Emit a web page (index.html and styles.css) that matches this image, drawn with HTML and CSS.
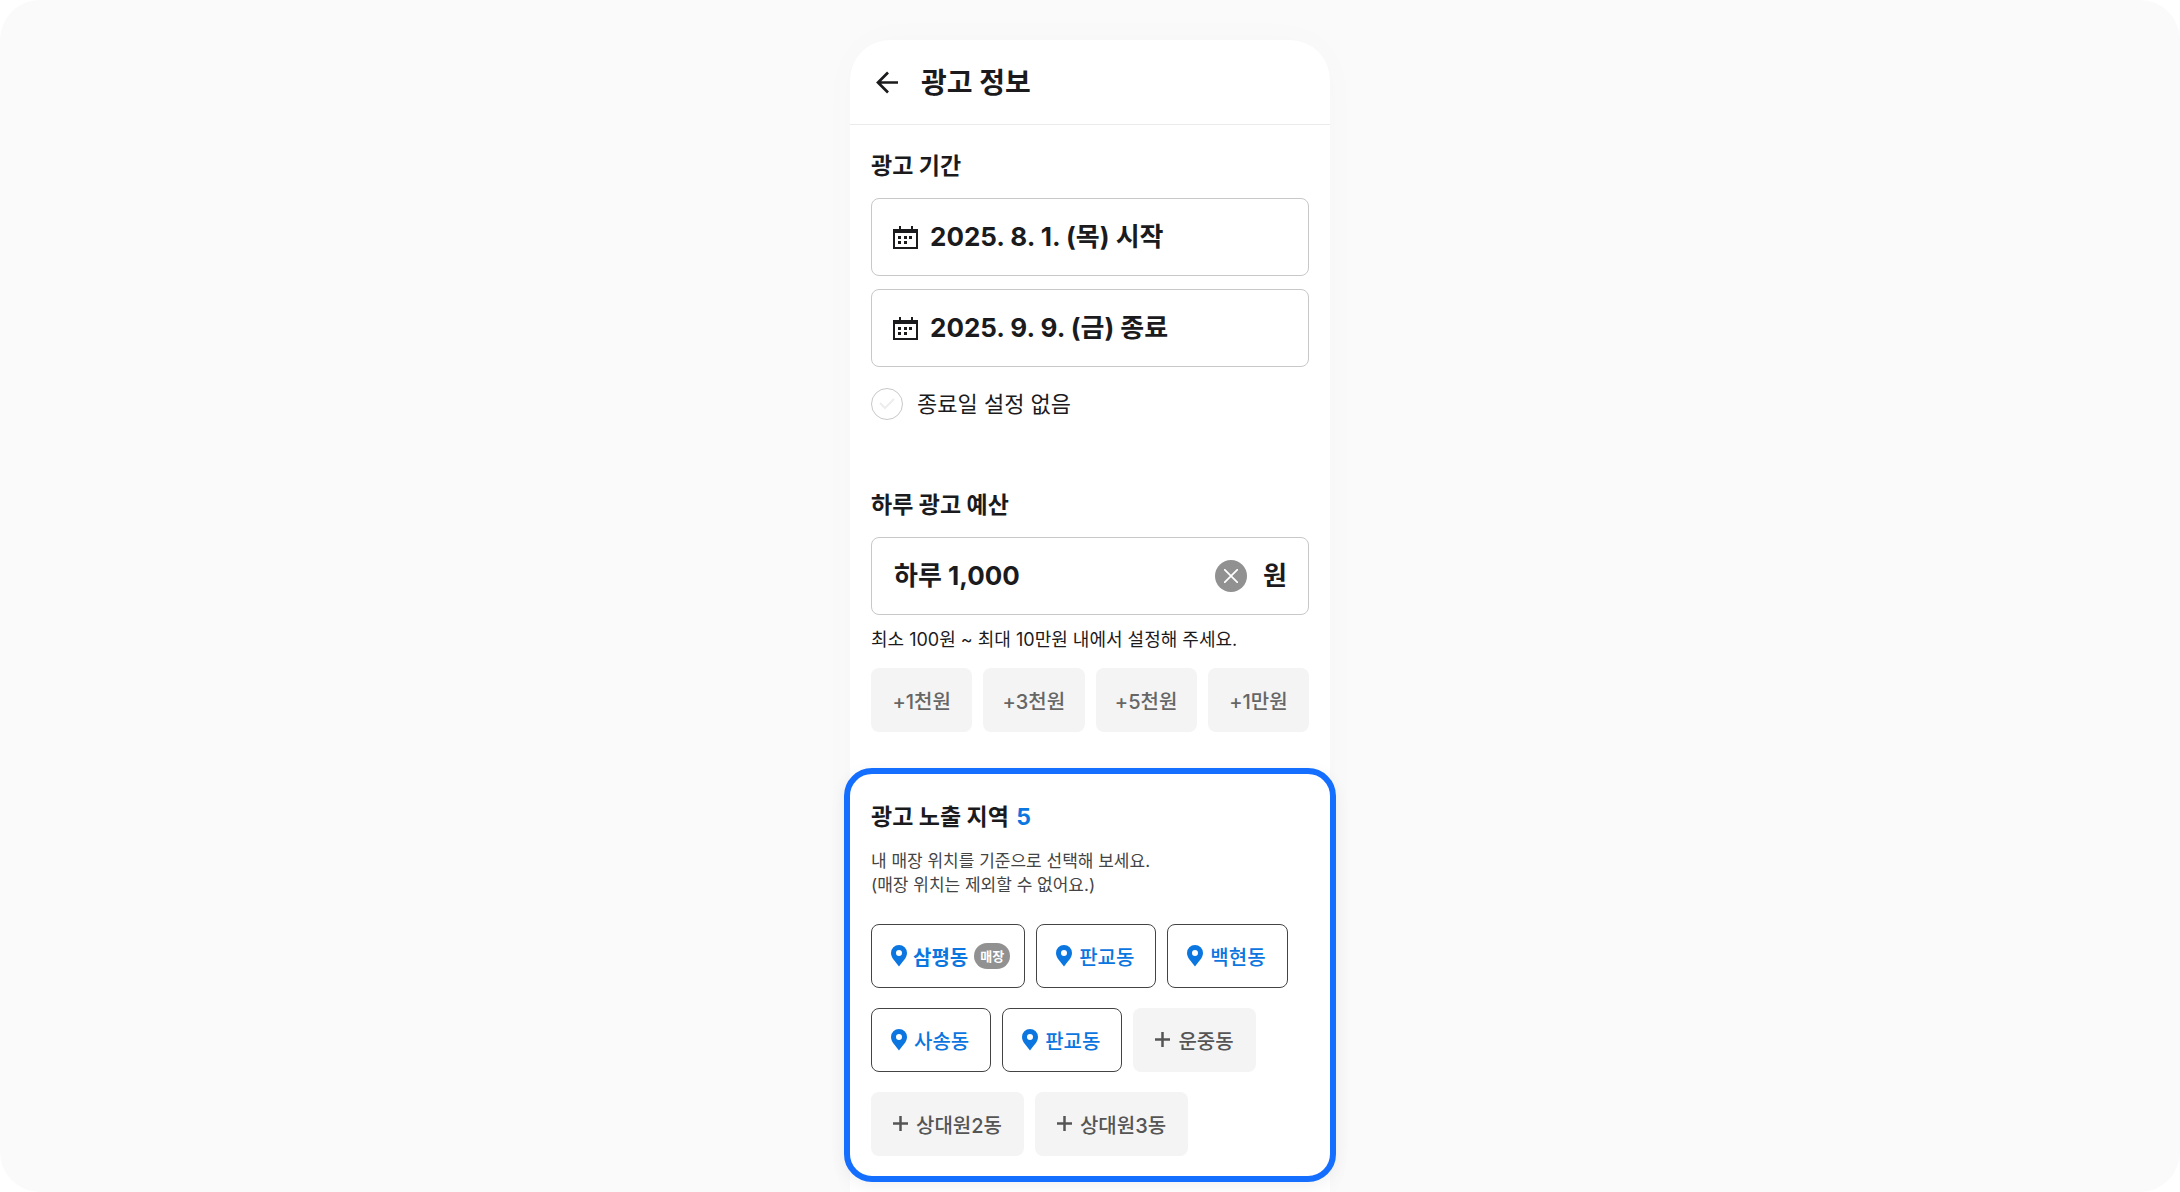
FILE: index.html
```html
<!DOCTYPE html>
<html lang="ko">
<head>
    <meta charset="UTF-8">
    <meta name="viewport" content="width=device-width, initial-scale=1.0">
    <title>광고 정보</title>
    <link rel="stylesheet" href="styles.css">
</head>
<body>
    <!-- Shared icons -->
    <svg class="sprite" aria-hidden="true">
        <symbol id="icon-calendar" viewBox="0 0 25 23">
            <path d="M7 0v4M19 0v4" stroke="currentColor" stroke-width="2" fill="none"/>
            <path fill-rule="evenodd" fill="currentColor" d="M0 3h25v20H0zM2 7v14h21V7z"/>
            <path fill="currentColor" d="M5 10h3v3H5zM11 10h3v3h-3zM16 10h3v3h-3zM5 15h3v3H5zM11 15h3v3h-3z"/>
        </symbol>
        <symbol id="icon-pin" viewBox="0 0 16 22">
            <path fill-rule="evenodd" fill="currentColor" d="M8 0a8 8 0 0 1 8 8c0 5-4.500 8.500-8 13.500C4.500 16.500 0 13 0 8a8 8 0 0 1 8-8zm0 5a3 3 0 1 0 0 6 3 3 0 0 0 0-6z"/>
        </symbol>
        <symbol id="icon-plus" viewBox="0 0 16 16">
            <path d="M7.500 0v15M0 7.500h15" stroke="currentColor" stroke-width="2.500" fill="none"/>
        </symbol>
    </svg>

    <main class="canvas">
        <div class="phone">
            <header class="topbar">
                <button class="back" type="button" aria-label="뒤로">
                    <svg width="24" height="24" viewBox="0 0 24 24" fill="none" stroke="currentColor" stroke-width="2.700">
                        <path d="M23 11.500H3M13 1.500l-10 10 10 10"/>
                    </svg>
                </button>
                <h1>광고 정보</h1>
            </header>

            <section class="section">
                <h2>광고 기간</h2>
                <div class="dates">
                    <button class="field" type="button">
                        <svg class="calendar"><use href="#icon-calendar"/></svg>
                        <span>2025. 8. 1. (목) 시작</span>
                    </button>
                    <button class="field" type="button">
                        <svg class="calendar"><use href="#icon-calendar"/></svg>
                        <span>2025. 9. 9. (금) 종료</span>
                    </button>
                </div>
                <label class="no-end">
                    <span class="check">
                        <input type="checkbox">
                        <svg width="16" height="12" viewBox="0 0 16 12" fill="none" stroke="currentColor" stroke-width="2">
                            <path d="M1 5l5 5 9-9"/>
                        </svg>
                    </span>
                    종료일 설정 없음
                </label>
            </section>

            <section class="section budget">
                <h2><label for="budget">하루 광고 예산</label></h2>
                <div class="field amount">
                    <input id="budget" type="text" value="하루 1,000">
                    <button class="clear" type="button" aria-label="지우기">
                        <svg width="14" height="14" viewBox="0 0 14 14" stroke="currentColor" stroke-width="1.700">
                            <path d="M0 0l14 14M14 0L0 14"/>
                        </svg>
                    </button>
                    <span>원</span>
                </div>
                <p class="hint">최소 100원 ~ 최대 10만원 내에서 설정해 주세요.</p>
                <div class="quick">
                    <button type="button">+1천원</button>
                    <button type="button">+3천원</button>
                    <button type="button">+5천원</button>
                    <button type="button">+1만원</button>
                </div>
            </section>

            <section class="regions">
                <h2>광고 노출 지역 <span class="count">5</span></h2>
                <p class="desc">내 매장 위치를 기준으로 선택해 보세요.<br>(매장 위치는 제외할 수 없어요.)</p>
                <div class="tags">
                    <button class="tag selected store" type="button"><svg class="pin"><use href="#icon-pin"/></svg>삼평동<span class="badge">매장</span></button>
                    <button class="tag selected" type="button"><svg class="pin"><use href="#icon-pin"/></svg>판교동</button>
                    <button class="tag selected" type="button"><svg class="pin"><use href="#icon-pin"/></svg>백현동</button>
                    <button class="tag selected" type="button"><svg class="pin"><use href="#icon-pin"/></svg>사송동</button>
                    <button class="tag selected" type="button"><svg class="pin"><use href="#icon-pin"/></svg>판교동</button>
                    <button class="tag" type="button"><svg class="plus"><use href="#icon-plus"/></svg>운중동</button>
                    <button class="tag" type="button"><svg class="plus"><use href="#icon-plus"/></svg>상대원2동</button>
                    <button class="tag" type="button"><svg class="plus"><use href="#icon-plus"/></svg>상대원3동</button>
                </div>
            </section>
        </div>
    </main>
</body>
</html>
```
FILE: styles.css
```css
* {
    box-sizing: border-box;
}
body {
    margin: 0;
    background: #fff;
    color: #1b1b1d;
    font-family: Inter, "Noto Sans CJK KR", sans-serif;
}
h1, h2, p {
    margin: 0;
}
button, input {
    margin: 0;
    padding: 0;
    border: 0;
    background: none;
    color: inherit;
    font: inherit;
}
button {
    cursor: pointer;
}
svg {
    flex: none;
    display: block;
}
.sprite {
    display: none;
}
.canvas {
    display: flex;
    justify-content: center;
    min-height: 100vh;
    padding-top: 40px;
    background: #fafafa;
    border-radius: 40px;
}
.phone {
    width: 100%;
    max-width: 480px;
    padding-bottom: 10px;
    background: #fff;
    border-radius: 40px 40px 0 0;
    box-shadow: 0 0 40px rgba(0, 0, 0, 0.02);
}
.topbar {
    display: flex;
    align-items: center;
    gap: 22px;
    padding: 23px 25px 21px;
    border-bottom: 1px solid #ebebeb;
}
.topbar h1 {
    font-size: 28px;
    line-height: 40px;
    font-weight: 700;
}
.section {
    padding: 25px 21px 0;
}
.budget {
    padding-top: 69px;
}
h2 {
    margin-bottom: 16px;
    font-size: 23px;
    line-height: 32px;
    font-weight: 700;
}
.dates {
    display: grid;
    gap: 13px;
}
.field {
    display: flex;
    align-items: center;
    gap: 12px;
    width: 100%;
    height: 78px;
    padding: 0 21px;
    border: 1px solid #c8c8c8;
    border-radius: 8px;
    font-size: 26px;
    font-weight: 700;
}
.field span,
.field input {
    padding-bottom: 5px;
}
.calendar {
    width: 25px;
    height: 23px;
}
.no-end {
    display: flex;
    align-items: center;
    gap: 14px;
    margin-top: 21px;
    font-size: 22px;
    line-height: 32px;
}
.check {
    display: grid;
    place-items: center;
    color: #ededed;
}
.check > * {
    grid-area: 1 / 1;
}
.check input {
    appearance: none;
    width: 32px;
    height: 32px;
    border: 1px solid #c8c8c8;
    border-radius: 50%;
}
.check input:checked {
    background: #0b76e0;
}
.amount {
    padding-left: 22px;
}
.amount input {
    flex: 1;
    min-width: 0;
    outline: none;
}
.clear {
    display: grid;
    place-items: center;
    width: 32px;
    height: 32px;
    margin-right: 4px;
    border-radius: 50%;
    background: #919191;
    color: #fff;
}
.hint {
    margin: 13px 0 16px;
    font-size: 18px;
    line-height: 24px;
}
.quick {
    display: grid;
    grid-template-columns: repeat(4, 1fr);
    gap: 11px;
}
.quick button {
    height: 64px;
    border-radius: 8px;
    background: #f4f4f4;
    color: #666;
    font-size: 20px;
    font-weight: 500;
}
/* the outline sits just outside the phone edges */
.regions {
    margin: 36px -6px 0;
    padding: 27px 21px 20px;
    border: 6px solid #146eff;
    border-radius: 28px;
    background: #fff;
    box-shadow: 0 4px 16px rgba(0, 0, 0, 0.06);
}
.count {
    margin-left: 2px;
    color: #0b76e0;
}
.desc {
    color: #444;
    font-size: 17px;
    line-height: 24px;
}
.tags {
    display: flex;
    flex-wrap: wrap;
    gap: 20px 11px;
    margin-top: 27px;
}
.tag {
    display: flex;
    align-items: center;
    gap: 7px;
    height: 64px;
    padding: 0 22px;
    border-radius: 8px;
    background: #f4f4f4;
    color: #555;
    font-size: 20px;
    font-weight: 500;
}
.selected {
    padding: 0 21px 0 19px;
    border: 1px solid #444;
    background: #fff;
    color: #0b76e0;
}
.store {
    gap: 6px;
    padding-right: 14px;
    font-weight: 700;
}
.pin {
    width: 16px;
    height: 22px;
}
.plus {
    width: 16px;
    height: 16px;
}
.badge {
    padding: 0 6px;
    border-radius: 13px;
    background: #919191;
    color: #fff;
    font-size: 13px;
    line-height: 26px;
}
```
